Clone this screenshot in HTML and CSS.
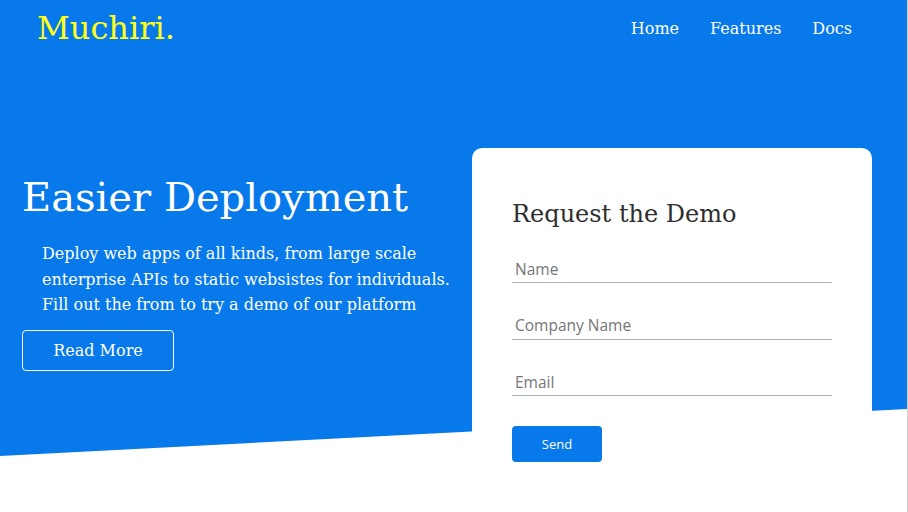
FILE: index.html
```html
<!DOCTYPE html>
<html lang="en">
<head>
<meta charset="utf-8">
<title>Muchiri.</title>
<link rel="stylesheet" href="styles.css">
</head>
<body>
<div class="page">
  <section class="hero">
    <header class="topbar">
      <div class="logo">Muchiri.</div>
      <nav class="nav">
        <a href="#">Home</a>
        <a href="#">Features</a>
        <a href="#">Docs</a>
      </nav>
    </header>
    <div class="main">
      <div class="intro">
        <h1 class="title">Easier Deployment</h1>
        <p class="lead">Deploy web apps of all kinds, from large scale enterprise APIs to static websistes for individuals. Fill out the from to try a demo of our platform</p>
        <a class="btn-outline" href="#">Read More</a>
      </div>
      <form class="card">
        <h2 class="card-title">Request the Demo</h2>
        <input class="field" type="text" placeholder="Name">
        <input class="field" type="text" placeholder="Company Name">
        <input class="field" type="email" placeholder="Email">
        <button class="btn-send" type="button">Send</button>
      </form>
    </div>
  </section>
</div>
</body>
</html>
```
FILE: styles.css
```css
html, body {
  margin: 0;
  padding: 0;
  background: #fff;
}
body {
  font-family: "DejaVu Serif", serif;
  overflow: hidden;
}
.page {
  width: 907px;
  height: 512px;
  border-right: 1px solid #cfcfcf;
  overflow: hidden;
}
.hero {
  position: relative;
  isolation: isolate;
  height: 456px;
}
.hero::before {
  content: "";
  position: absolute;
  inset: 0;
  background: #0779ea;
  clip-path: polygon(0 0, 100% 0, 100% 409px, 0 456px);
  z-index: -1;
}
.topbar {
  display: flex;
  align-items: center;
  justify-content: space-between;
  height: 56px;
  padding: 0 55px 0 37px;
}
.logo {
  color: #ffff1a;
  font-size: 32px;
  line-height: 56px;
}
.nav {
  display: flex;
  gap: 31px;
}
.nav a {
  color: #fff;
  text-decoration: none;
  font-size: 16px;
}
.main {
  display: flex;
  align-items: flex-start;
  padding: 92px 0 0 22px;
}
.intro {
  width: 450px;
  padding-top: 25px;
}
.title {
  margin: 0;
  color: #fff;
  font-weight: normal;
  font-size: 40px;
  line-height: 48px;
}
.lead {
  margin: 20px 0 0;
  padding-left: 20px;
  color: #fff;
  font-size: 16px;
  line-height: 25.5px;
}
.btn-outline {
  display: flex;
  align-items: center;
  justify-content: center;
  box-sizing: border-box;
  width: 152px;
  height: 41px;
  margin-top: 12px;
  border: 1px solid #fff;
  border-radius: 4px;
  color: #fff;
  text-decoration: none;
  font-size: 16px;
}
.card {
  box-sizing: border-box;
  width: 400px;
  margin: 0;
  padding: 40px 40px 40px;
  background: #fff;
  border-radius: 10px;
  display: flex;
  flex-direction: column;
  align-items: flex-start;
}
.card-title {
  margin: 11px 0 23px;
  color: #2e2e2e;
  font-weight: normal;
  font-size: 24px;
  line-height: 30px;
}
.field {
  box-sizing: border-box;
  width: 320px;
  height: 31px;
  margin: 0 0 25.5px;
  padding: 3px 3px 0;
  border: 0;
  border-bottom: 1px solid #a9b5c3;
  outline: none;
  background: transparent;
  font-family: "Open Sans", sans-serif;
  font-size: 15.5px;
  color: #333;
}
.field::placeholder {
  color: #767676;
}
.btn-send {
  width: 90px;
  height: 36px;
  margin-top: 4px;
  border: 0;
  border-radius: 4px;
  background: #0779ea;
  color: #fff;
  font-family: "Open Sans", sans-serif;
  font-size: 13px;
}
```
